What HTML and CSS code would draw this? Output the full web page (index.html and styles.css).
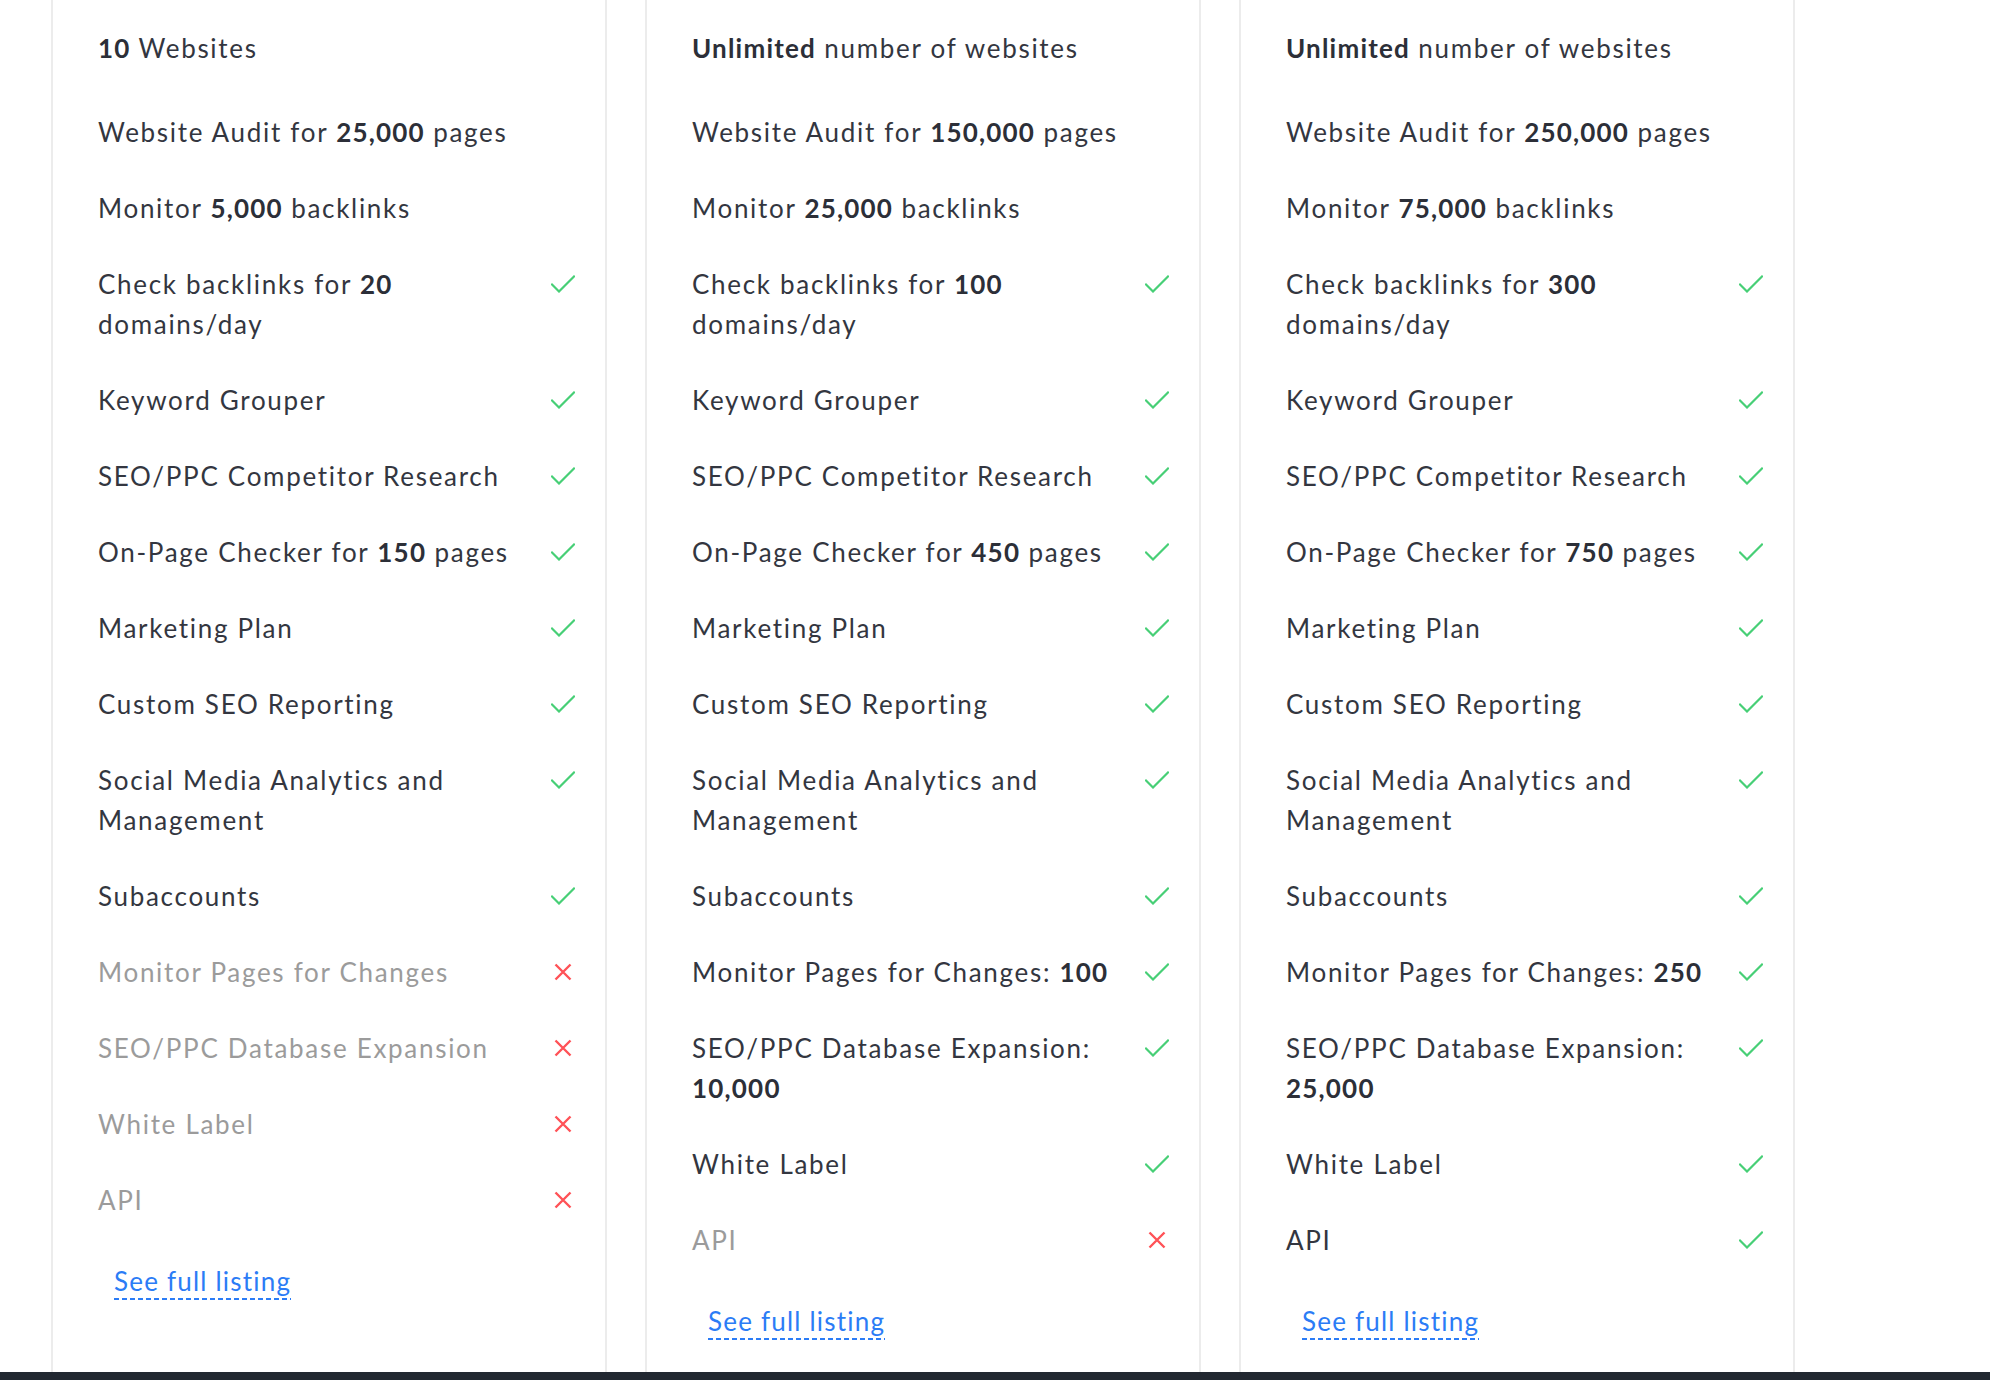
FILE: index.html
```html
<!DOCTYPE html>
<html lang="en">
<head>
<meta charset="utf-8">
<title>Plans</title>
<link rel="stylesheet" href="styles.css">
</head>
<body>
<div class="page">
  <div class="cards">
    <!-- Card 1 -->
    <div class="card">
      <div class="row first"><span class="txt"><b>10</b> Websites</span></div>
      <div class="row"><span class="txt">Website Audit for <b>25,000</b> pages</span></div>
      <div class="row"><span class="txt">Monitor <b>5,000</b> backlinks</span></div>
      <div class="row"><span class="txt">Check backlinks for <b>20</b> domains/day</span><span class="ic"><svg class="ck" viewBox="0 0 24 18"><path d="M1 9.5 L8 16.5 L23 1.5"/></svg></span></div>
      <div class="row"><span class="txt">Keyword Grouper</span><span class="ic"><svg class="ck" viewBox="0 0 24 18"><path d="M1 9.5 L8 16.5 L23 1.5"/></svg></span></div>
      <div class="row"><span class="txt">SEO/PPC Competitor Research</span><span class="ic"><svg class="ck" viewBox="0 0 24 18"><path d="M1 9.5 L8 16.5 L23 1.5"/></svg></span></div>
      <div class="row"><span class="txt">On-Page Checker for <b>150</b> pages</span><span class="ic"><svg class="ck" viewBox="0 0 24 18"><path d="M1 9.5 L8 16.5 L23 1.5"/></svg></span></div>
      <div class="row"><span class="txt">Marketing Plan</span><span class="ic"><svg class="ck" viewBox="0 0 24 18"><path d="M1 9.5 L8 16.5 L23 1.5"/></svg></span></div>
      <div class="row"><span class="txt">Custom SEO Reporting</span><span class="ic"><svg class="ck" viewBox="0 0 24 18"><path d="M1 9.5 L8 16.5 L23 1.5"/></svg></span></div>
      <div class="row"><span class="txt">Social Media Analytics and Management</span><span class="ic"><svg class="ck" viewBox="0 0 24 18"><path d="M1 9.5 L8 16.5 L23 1.5"/></svg></span></div>
      <div class="row"><span class="txt">Subaccounts</span><span class="ic"><svg class="ck" viewBox="0 0 24 18"><path d="M1 9.5 L8 16.5 L23 1.5"/></svg></span></div>
      <div class="row off"><span class="txt">Monitor Pages for Changes</span><span class="ic"><svg class="x" viewBox="0 0 18 18"><path d="M1.5 1.5 L16.5 16.5 M16.5 1.5 L1.5 16.5"/></svg></span></div>
      <div class="row off"><span class="txt">SEO/PPC Database Expansion</span><span class="ic"><svg class="x" viewBox="0 0 18 18"><path d="M1.5 1.5 L16.5 16.5 M16.5 1.5 L1.5 16.5"/></svg></span></div>
      <div class="row off"><span class="txt">White Label</span><span class="ic"><svg class="x" viewBox="0 0 18 18"><path d="M1.5 1.5 L16.5 16.5 M16.5 1.5 L1.5 16.5"/></svg></span></div>
      <div class="row off"><span class="txt">API</span><span class="ic"><svg class="x" viewBox="0 0 18 18"><path d="M1.5 1.5 L16.5 16.5 M16.5 1.5 L1.5 16.5"/></svg></span></div>
      <div class="more"><a class="link" href="#">See full listing</a></div>
    </div>

    <!-- Card 2 -->
    <div class="card">
      <div class="row first"><span class="txt"><b>Unlimited</b> number of websites</span></div>
      <div class="row"><span class="txt">Website Audit for <b>150,000</b> pages</span></div>
      <div class="row"><span class="txt">Monitor <b>25,000</b> backlinks</span></div>
      <div class="row"><span class="txt">Check backlinks for <b>100</b> domains/day</span><span class="ic"><svg class="ck" viewBox="0 0 24 18"><path d="M1 9.5 L8 16.5 L23 1.5"/></svg></span></div>
      <div class="row"><span class="txt">Keyword Grouper</span><span class="ic"><svg class="ck" viewBox="0 0 24 18"><path d="M1 9.5 L8 16.5 L23 1.5"/></svg></span></div>
      <div class="row"><span class="txt">SEO/PPC Competitor Research</span><span class="ic"><svg class="ck" viewBox="0 0 24 18"><path d="M1 9.5 L8 16.5 L23 1.5"/></svg></span></div>
      <div class="row"><span class="txt">On-Page Checker for <b>450</b> pages</span><span class="ic"><svg class="ck" viewBox="0 0 24 18"><path d="M1 9.5 L8 16.5 L23 1.5"/></svg></span></div>
      <div class="row"><span class="txt">Marketing Plan</span><span class="ic"><svg class="ck" viewBox="0 0 24 18"><path d="M1 9.5 L8 16.5 L23 1.5"/></svg></span></div>
      <div class="row"><span class="txt">Custom SEO Reporting</span><span class="ic"><svg class="ck" viewBox="0 0 24 18"><path d="M1 9.5 L8 16.5 L23 1.5"/></svg></span></div>
      <div class="row"><span class="txt">Social Media Analytics and Management</span><span class="ic"><svg class="ck" viewBox="0 0 24 18"><path d="M1 9.5 L8 16.5 L23 1.5"/></svg></span></div>
      <div class="row"><span class="txt">Subaccounts</span><span class="ic"><svg class="ck" viewBox="0 0 24 18"><path d="M1 9.5 L8 16.5 L23 1.5"/></svg></span></div>
      <div class="row"><span class="txt">Monitor Pages for Changes: <b>100</b></span><span class="ic"><svg class="ck" viewBox="0 0 24 18"><path d="M1 9.5 L8 16.5 L23 1.5"/></svg></span></div>
      <div class="row"><span class="txt">SEO/PPC Database Expansion: <b>10,000</b></span><span class="ic"><svg class="ck" viewBox="0 0 24 18"><path d="M1 9.5 L8 16.5 L23 1.5"/></svg></span></div>
      <div class="row"><span class="txt">White Label</span><span class="ic"><svg class="ck" viewBox="0 0 24 18"><path d="M1 9.5 L8 16.5 L23 1.5"/></svg></span></div>
      <div class="row off"><span class="txt">API</span><span class="ic"><svg class="x" viewBox="0 0 18 18"><path d="M1.5 1.5 L16.5 16.5 M16.5 1.5 L1.5 16.5"/></svg></span></div>
      <div class="more"><a class="link" href="#">See full listing</a></div>
    </div>

    <!-- Card 3 -->
    <div class="card">
      <div class="row first"><span class="txt"><b>Unlimited</b> number of websites</span></div>
      <div class="row"><span class="txt">Website Audit for <b>250,000</b> pages</span></div>
      <div class="row"><span class="txt">Monitor <b>75,000</b> backlinks</span></div>
      <div class="row"><span class="txt">Check backlinks for <b>300</b> domains/day</span><span class="ic"><svg class="ck" viewBox="0 0 24 18"><path d="M1 9.5 L8 16.5 L23 1.5"/></svg></span></div>
      <div class="row"><span class="txt">Keyword Grouper</span><span class="ic"><svg class="ck" viewBox="0 0 24 18"><path d="M1 9.5 L8 16.5 L23 1.5"/></svg></span></div>
      <div class="row"><span class="txt">SEO/PPC Competitor Research</span><span class="ic"><svg class="ck" viewBox="0 0 24 18"><path d="M1 9.5 L8 16.5 L23 1.5"/></svg></span></div>
      <div class="row"><span class="txt">On-Page Checker for <b>750</b> pages</span><span class="ic"><svg class="ck" viewBox="0 0 24 18"><path d="M1 9.5 L8 16.5 L23 1.5"/></svg></span></div>
      <div class="row"><span class="txt">Marketing Plan</span><span class="ic"><svg class="ck" viewBox="0 0 24 18"><path d="M1 9.5 L8 16.5 L23 1.5"/></svg></span></div>
      <div class="row"><span class="txt">Custom SEO Reporting</span><span class="ic"><svg class="ck" viewBox="0 0 24 18"><path d="M1 9.5 L8 16.5 L23 1.5"/></svg></span></div>
      <div class="row"><span class="txt">Social Media Analytics and Management</span><span class="ic"><svg class="ck" viewBox="0 0 24 18"><path d="M1 9.5 L8 16.5 L23 1.5"/></svg></span></div>
      <div class="row"><span class="txt">Subaccounts</span><span class="ic"><svg class="ck" viewBox="0 0 24 18"><path d="M1 9.5 L8 16.5 L23 1.5"/></svg></span></div>
      <div class="row"><span class="txt">Monitor Pages for Changes: <b>250</b></span><span class="ic"><svg class="ck" viewBox="0 0 24 18"><path d="M1 9.5 L8 16.5 L23 1.5"/></svg></span></div>
      <div class="row"><span class="txt">SEO/PPC Database Expansion: <b>25,000</b></span><span class="ic"><svg class="ck" viewBox="0 0 24 18"><path d="M1 9.5 L8 16.5 L23 1.5"/></svg></span></div>
      <div class="row"><span class="txt">White Label</span><span class="ic"><svg class="ck" viewBox="0 0 24 18"><path d="M1 9.5 L8 16.5 L23 1.5"/></svg></span></div>
      <div class="row"><span class="txt">API</span><span class="ic"><svg class="ck" viewBox="0 0 24 18"><path d="M1 9.5 L8 16.5 L23 1.5"/></svg></span></div>
      <div class="more"><a class="link" href="#">See full listing</a></div>
    </div>
  </div>
  <div class="footer-bar"></div>
</div>
</body>
</html>
```

FILE: styles.css
```css
html, body {
  margin: 0;
  padding: 0;
  background: #ffffff;
}

body {
  font-family: "Lato", "Liberation Sans", sans-serif;
  font-size: 26px;
  letter-spacing: 1.7px;
  color: #333640;
}

.page {
  display: flex;
  flex-direction: column;
  height: 1380px;
  overflow: hidden;
}

.cards {
  flex: 1;
  display: flex;
  gap: 38px;
  padding-left: 51px;
}

.card {
  width: 556px;
  border-left: 2px solid #ececec;
  border-right: 2px solid #ececec;
  padding: 10px 30px 0 45px;
  box-sizing: border-box;
}

.row {
  display: flex;
  justify-content: space-between;
  align-items: flex-start;
  gap: 16px;
  padding: 18px 0;
  line-height: 40px;
}

.row.first {
  margin-bottom: 8px;
}

.txt {
  flex: 1;
}

.txt b {
  font-weight: 700;
  letter-spacing: 1.2px;
  color: #2c2f38;
}

.row.off .txt {
  color: #9b9b9b;
}

.ic {
  flex: 0 0 24px;
  width: 24px;
  height: 40px;
  display: flex;
  align-items: center;
  justify-content: center;
}

.ck {
  width: 24px;
  height: 18px;
  fill: none;
  stroke: #47cf76;
  stroke-width: 2.2;
  stroke-linecap: square;
}

.x {
  width: 18px;
  height: 18px;
  fill: none;
  stroke: #ff5257;
  stroke-width: 2.4;
}

.more {
  margin-top: 23px;
  padding-left: 16px;
  line-height: 40px;
}

.link {
  color: #2b7cf6;
  letter-spacing: 1.2px;
  text-decoration: none;
  padding-bottom: 3px;
  background-image: repeating-linear-gradient(to right, #2b7cf6 0 5px, transparent 5px 8px);
  background-size: 100% 2px;
  background-repeat: no-repeat;
  background-position: left bottom;
}

.footer-bar {
  height: 8px;
  background: #222831;
  flex: 0 0 8px;
}
```
